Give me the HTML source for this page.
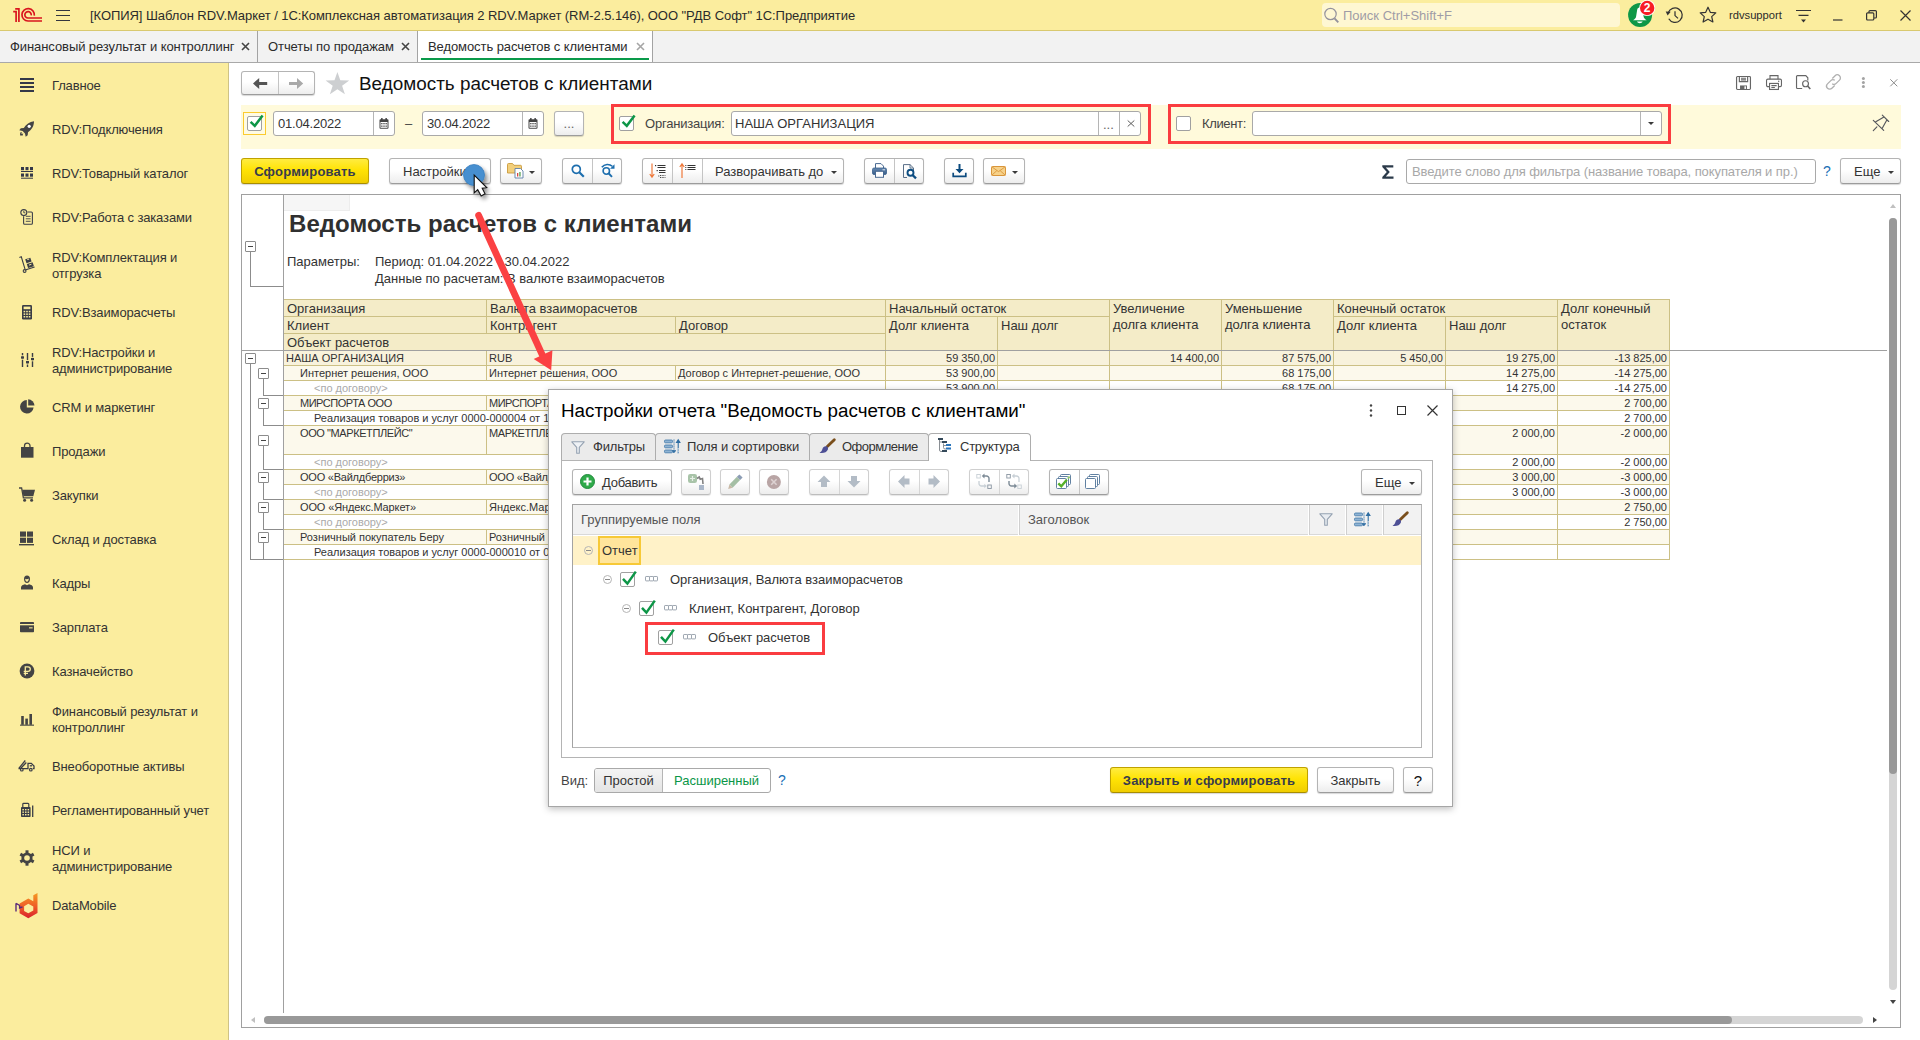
<!DOCTYPE html>
<html lang="ru">
<head>
<meta charset="utf-8">
<title>1C</title>
<style>
*{box-sizing:border-box;margin:0;padding:0}
html,body{width:1920px;height:1040px;overflow:hidden;background:#fff}
body{font-family:"Liberation Sans",sans-serif;font-size:13px;color:#333;position:relative}
.abs{position:absolute}
svg{display:block;position:absolute;overflow:visible}
/* title bar */
#titlebar{position:absolute;left:0;top:0;width:1920px;height:31px;background:#fbed9e;border-bottom:1px solid #d9c96f}
#titlebar .ttl{position:absolute;left:90px;top:1px;height:30px;line-height:30px;font-size:13px;color:#2b2b2b;white-space:nowrap;letter-spacing:-0.06px}
#search{position:absolute;left:1322px;top:3px;width:298px;height:24px;background:#fef7d3;border-radius:4px}
#search span{position:absolute;left:21px;top:0;line-height:25px;font-size:13px;color:#9f9ca6;white-space:nowrap}
/* tab bar */
#tabbar{position:absolute;left:0;top:31px;width:1920px;height:32px;background:#f2f2f2;border-bottom:1px solid #a9a9a9}
.tab{position:absolute;top:0;height:31px;line-height:32px;letter-spacing:-0.080px;font-size:13px;color:#2b2b2b;white-space:nowrap;border-right:1px solid #a3a3a3;padding-left:8px}
.tab .x{position:absolute;top:11px;width:9px;height:9px}
/* sidebar */
#sidebar{position:absolute;left:0;top:63px;width:229px;height:977px;background:#fbed9e;border-right:1px solid #cfc385}
.si{position:absolute;left:52px;margin-top:1px;letter-spacing:-0.140px;font-size:13px;line-height:16px;color:#333;white-space:nowrap}
.ic{position:absolute;left:17px;width:20px;height:20px}

/* main */
.btn{position:absolute;height:26px;border:1px solid #b4b4b4;border-bottom-color:#9c9c9c;border-radius:3px;background:linear-gradient(#ffffff,#ffffff 45%,#ededed);box-shadow:0 1px 1px rgba(0,0,0,.16);font-size:13px;line-height:26px;color:#333;white-space:nowrap;text-align:center}
.btn .dv{position:absolute;top:0;width:1px;height:24px;background:#c4c4c4}
.btn.y{border-color:#bfa100;border-bottom-color:#a88d00;background:linear-gradient(#ffec40,#ffe305 45%,#f0cd00);font-weight:bold;color:#383c4c;letter-spacing:.220px}
.inp{position:absolute;height:25px;border:1px solid #a9a9a9;border-radius:3px;background:#fff;font-size:13px;line-height:23px;color:#333;white-space:nowrap}
.inp .dv{position:absolute;top:0;width:1px;height:23px;background:#b5b5b5}
.cb{position:absolute;width:15px;height:15px;border:1px solid #a0a0a0;border-radius:2px;background:#fff}
.cb svg{left:0px;top:-3px}
.lbl{position:absolute;margin-top:1px;font-size:13px;line-height:16px;color:#444;white-space:nowrap}
.redbox{position:absolute;border:3px solid #fa3c40}
.arr{position:absolute;width:0;height:0;border-left:3px solid transparent;border-right:3px solid transparent;border-top:3px solid #3a3a3a}

/* report */
#rep{position:absolute;left:241px;top:194px;width:1660px;height:834px;border:1px solid #a0a0a0;background:#fff;overflow:hidden}
#rep .c{position:absolute;box-sizing:border-box;border-right:1px solid #ccc085;border-bottom:1px solid #ccc085;font-size:11px;line-height:14px;color:#333;white-space:nowrap;overflow:hidden;padding-left:3px}
#rep .h{background:#f4ecc8;font-size:13px;line-height:16px;padding-left:3px;padding-top:1px;color:#333}
#rep .n{text-align:right;padding-right:2px;padding-left:0}
#rep .g{color:#aaa}
.tg{position:absolute;width:11px;height:11px;border:1px solid #8c8c8c;border-radius:1px;background:#fff}
.tg:after{content:"";position:absolute;left:2px;top:4px;width:5px;height:1px;background:#444}
.ln{position:absolute;background:#8c8c8c}

/* dialog */
#dlg{position:absolute;left:548px;top:389px;width:905px;height:418px;background:#fff;border:1px solid #a6a6a6;box-shadow:0 2px 7px rgba(0,0,0,.26)}
#dlg .dt{position:absolute;top:43px;height:27px;border:1px solid #adadad;border-bottom:none;border-radius:4px 4px 0 0;background:#ebebeb;font-size:13px;line-height:25px;color:#333;white-space:nowrap}
#dlg .dt span{position:absolute;top:0}
.btn.dis{border-color:#cfcfcf;border-bottom-color:#bdbdbd;box-shadow:0 1px 1px rgba(0,0,0,.1)}
.btn.dis .dv{background:#d6d6d6}
.tcb{position:absolute;width:15px;height:15px;border:1px solid #a0a0a0;border-radius:2px;background:#fff}
.tcb svg{left:0px;top:-2px}
.col{position:absolute;width:9px;height:9px;border:1px solid #b5b5b5;border-radius:50%}
.col:after{content:"";position:absolute;left:1px;top:3px;width:5px;height:1px;background:#8a8a8a}
.trow{position:absolute;font-size:13px;line-height:16px;color:#333;white-space:nowrap}
</style>
</head>
<body>
<!-- ===== TITLE BAR ===== -->
<div id="titlebar">
  <svg style="left:0;top:0" width="50" height="30" viewBox="0 0 50 30"><g fill="none" stroke="#d9161f" stroke-width="1.700"><path d="M13.200 11.700H16.100V22"/><path d="M15.200 8.800H18.900V22"/><path d="M34.300 15.600A6.200 6.200 0 1 0 28 21H42"/><path d="M31.200 15.400A3.200 3.200 0 1 0 28 18H42"/></g></svg>
  <svg style="left:56px;top:10px" width="14" height="11" viewBox="0 0 14 11" shape-rendering="crispEdges"><path d="M0 0h14v1H0zM0 5h14v1H0zM0 10h14v1H0z" fill="#33363f"/></svg>
  <div class="ttl">[КОПИЯ] Шаблон RDV.Маркет / 1С:Комплексная автоматизация 2 RDV.Маркет (RM-2.5.146), ООО "РДВ Софт" 1С:Предприятие</div>
  <div id="search"><svg style="left:2px;top:4px" width="16" height="17" viewBox="0 0 16 17"><circle cx="6.5" cy="7" r="5.7" fill="none" stroke="#94929c" stroke-width="1.2"/><path d="M10.5 11.3 L14.3 15.3" stroke="#94929c" stroke-width="1.9"/></svg><span>Поиск Ctrl+Shift+F</span></div>
  <!-- bell -->
  <svg style="left:1627px;top:0" width="32" height="30" viewBox="0 0 32 30"><circle cx="13.1" cy="14.9" r="12" fill="#0e9747"/><path d="M12.6 7.6c-1.500 0-2.300 1.200-2.500 2.600l-1 6.300c-.3 1.600-1.300 2.800-3.100 3.800h13.700c-1.800-1-2.800-2.200-3.100-3.800l-1-6.300c-.2-1.400-1-2.600-2.500-2.600z" fill="#fff"/><path d="M10 21.600h5.600c-.5 1.200-1.500 1.700-2.800 1.700s-2.300-.5-2.800-1.700z" fill="#fff"/><circle cx="20.200" cy="8" r="8" fill="#fff"/><circle cx="20.200" cy="8" r="7.200" fill="#f81c24"/><text x="20.200" y="12.300" font-family="Liberation Sans" font-size="12" font-weight="bold" fill="#fff" text-anchor="middle">2</text></svg>
  <!-- history -->
  <svg style="left:1662px;top:4px" width="24" height="22" viewBox="1662 4 24 22"><g fill="none" stroke="#333" stroke-width="1.25"><path d="M1668.15 12.97A7.2 7.2 0 1 1 1668.76 18.8"/><path d="M1675 11.300V15.600L1678 18.400"/></g><path d="M1665.700 11.500L1670.700 11.800L1667.600 15.400Z" fill="#333"/></svg>
  <!-- star -->
  <svg style="left:1699px;top:6px" width="18" height="17" viewBox="0 0 18 17"><path d="M9 1.200 L11.300 6.300 L16.800 6.900 L12.700 10.600 L13.900 16 L9 13.200 L4.100 16 L5.300 10.600 L1.200 6.900 L6.700 6.300 Z" fill="none" stroke="#333" stroke-width="1.200" stroke-linejoin="round"/></svg>
  <div class="abs" style="left:1729px;top:0;line-height:30px;font-size:11.2px;color:#2b2b2b">rdvsupport</div>
  <svg style="left:1796px;top:9px" width="15" height="14" viewBox="0 0 15 14"><path d="M0 1.500h15M2.500 6.300h10" stroke="#333" stroke-width="1.200"/><path d="M5 10.500h5l-2.500 3z" fill="#333"/></svg>
  <svg style="left:1833px;top:19px" width="10" height="2" viewBox="0 0 10 2"><path d="M0 1h9.500" stroke="#333" stroke-width="1.200"/></svg>
  <svg style="left:1866px;top:10px" width="11" height="11" viewBox="0 0 11 11"><rect x=".6" y="2.800" width="7.200" height="7.200" rx="1" fill="none" stroke="#333" stroke-width="1.200"/><path d="M3 2.800V1.600a1 1 0 0 1 1-1h5.400a1 1 0 0 1 1 1v5.400a1 1 0 0 1-1 1H8" fill="none" stroke="#333" stroke-width="1.200"/></svg>
  <svg style="left:1900px;top:10px" width="11" height="11" viewBox="0 0 11 11"><path d="M.5.500l10 10M10.500.5l-10 10" stroke="#333" stroke-width="1.200"/></svg>
</div>
<!-- ===== TAB BAR ===== -->
<div id="tabbar">
  <div class="tab" style="left:0;width:258px;padding-left:10px">Финансовый результат и контроллинг<svg class="x" style="left:241px" viewBox="0 0 9 9"><path d="M1 1l7 7M8 1l-7 7" stroke="#444" stroke-width="1.600"/></svg></div>
  <div class="tab" style="left:258px;width:160px;padding-left:10px">Отчеты по продажам<svg class="x" style="left:143px" viewBox="0 0 9 9"><path d="M1 1l7 7M8 1l-7 7" stroke="#444" stroke-width="1.600"/></svg></div>
  <div class="tab" style="left:418px;width:235px;padding-left:10px;background:#fff;height:31px">Ведомость расчетов с клиентами<svg class="x" style="left:218px" viewBox="0 0 9 9"><path d="M1 1l7 7M8 1l-7 7" stroke="#a6a6a6" stroke-width="1.600"/></svg><div class="abs" style="left:3px;top:27px;width:228px;height:2px;background:#0a9a4a"></div></div>
</div>
<!-- ===== SIDEBAR ===== -->
<div id="sidebar">
  <svg style="left:20px;top:15px" width="14" height="14" viewBox="0 0 14 14"><path d="M0 1h14M0 5h14M0 9h14M0 13h14" stroke="#343848" stroke-width="2"/></svg>
  <div class="si" style="top:14px">Главное</div>
  <svg style="left:19px;top:58px" width="16" height="16" viewBox="0 0 16 16"><path d="M15 0.300 C10.500 1 7 3.500 4.800 7 L1.800 7.300 L0.300 9.300 L3.600 10 L6 12.400 L6.700 15.700 L8.700 14.200 L9 11.200 C12.500 9 15 5.500 15 0.300Z" fill="#444"/><circle cx="10.200" cy="5.300" r="1.600" fill="#fff"/><path d="M1.200 11.600 L3 11.200 L2.300 12.900 L4.300 12.500 L3.200 15 L1.800 14 L1 15.200 Z" fill="#444"/></svg>
  <div class="si" style="top:58px">RDV:Подключения</div>
  <svg style="left:21px;top:104px" width="12" height="12" viewBox="0 0 12 12"><g fill="#343848"><rect x="0" y="0" width="3" height="3.200"/><rect x="4.500" y="0" width="3" height="3.200"/><rect x="9" y="0" width="3" height="3.200"/><rect x="0" y="4" width="12" height="1"/><rect x="0" y="6.500" width="3" height="3.200"/><rect x="4.500" y="6.500" width="3" height="3.200"/><rect x="9" y="6.500" width="3" height="3.200"/><rect x="0" y="10.700" width="12" height="1"/></g></svg>
  <div class="si" style="top:102px">RDV:Товарный каталог</div>
  <svg style="left:20px;top:146px" width="14" height="16" viewBox="0 0 14 16"><g fill="none" stroke="#3c3f4a" stroke-width="1.100"><path d="M3.600 7.200 V14.200 a1 1 0 0 0 1 1 H11.400 a1 1 0 0 0 1 -1 V4 a1 1 0 0 0 -1 -1 H7.500"/><circle cx="3.800" cy="3.600" r="3"/><path d="M3.800 1.800 V3.800 H5.300" stroke-width=".9"/><path d="M5.800 7.300h4.800M5.800 9.800h4.800M5.800 12.300h4.800" stroke-width=".9"/></g></svg>
  <div class="si" style="top:146px">RDV:Работа с заказами</div>
  <svg style="left:19px;top:193px" width="16" height="17" viewBox="0 0 16 17"><g stroke="#3a3d46" fill="none" stroke-width="1.100"><path d="M0.400 1.600 L2.300 0.800 L6 13.200"/><path d="M6.200 14 L15.600 11"/><circle cx="5.600" cy="15" r="1.400"/></g><g fill="#3a3d46"><path d="M6.200 3.300 L11.300 1.700 L12.600 5.600 L7.500 7.200Z"/><path d="M7.800 8.100 L13.600 6.300 L14.900 10.300 L9.100 12.100Z"/></g><path d="M8.300 3.600 L10.200 3 M10 9.100 L12.400 8.300" stroke="#fbed9e" stroke-width="1"/></svg>
  <div class="si" style="top:186px">RDV:Комплектация и<br>отгрузка</div>
  <svg style="left:22px;top:242px" width="10" height="15" viewBox="0 0 10 15"><rect x="0" y="0" width="10" height="14.500" rx="1.300" fill="#3a3d46"/><rect x="1.600" y="1.600" width="6.800" height="2.600" fill="#fbed9e"/><g fill="#fbed9e"><rect x="1.600" y="5.800" width="1.600" height="1.500"/><rect x="4.200" y="5.800" width="1.600" height="1.500"/><rect x="6.800" y="5.800" width="1.600" height="1.500"/><rect x="1.600" y="8.400" width="1.600" height="1.500"/><rect x="4.200" y="8.400" width="1.600" height="1.500"/><rect x="6.800" y="8.400" width="1.600" height="1.500"/><rect x="1.600" y="11" width="1.600" height="1.500"/><rect x="4.200" y="11" width="1.600" height="1.500"/><rect x="6.800" y="11" width="1.600" height="1.500"/></g></svg>
  <div class="si" style="top:241px">RDV:Взаиморасчеты</div>
  <svg style="left:21px;top:290px" width="13" height="14" viewBox="0 0 13 14"><g stroke="#3a3d46" stroke-width="1.400"><path d="M1.500 0V14M6.500 0V14M11.500 0V14"/></g><g fill="#3a3d46"><rect x="0" y="3.200" width="3" height="2.600"/><rect x="5" y="8" width="3" height="2.600"/><rect x="10" y="4.800" width="3" height="2.600"/></g><g fill="#fbed9e"><rect x="0" y="2.300" width="3" height=".9"/><rect x="0" y="5.800" width="3" height=".9"/><rect x="5" y="7.100" width="3" height=".9"/><rect x="5" y="10.600" width="3" height=".9"/><rect x="10" y="3.900" width="3" height=".9"/><rect x="10" y="7.400" width="3" height=".9"/></g></svg>
  <div class="si" style="top:281px">RDV:Настройки и<br>администрирование</div>
  <svg style="left:20px;top:336px" width="15" height="15" viewBox="0 0 15 15"><path d="M6.800 1 A6.800 6.800 0 1 0 13.600 8.500 L6.800 8.500 Z" fill="#444"/><path d="M8.200 0.300 A6.600 6.600 0 0 1 14.500 6.600 L8.200 6.600 Z" fill="#444"/></svg>
  <div class="si" style="top:336px">CRM и маркетинг</div>
  <svg style="left:21px;top:379px" width="13" height="16" viewBox="0 0 13 16"><path d="M0 5H12.500V15.700H0Z" fill="#444"/><path d="M3.500 7 V3.800 a2.750 2.750 0 0 1 5.500 0 V7" fill="none" stroke="#444" stroke-width="1.300"/><path d="M3.500 5 V7 M9 5 V7" stroke="#fbed9e" stroke-width="1.300" opacity="0"/></svg>
  <div class="si" style="top:380px">Продажи</div>
  <svg style="left:19px;top:424px" width="16" height="15" viewBox="0 0 16 15"><path d="M0 1 H2.600 L4.400 10.800 H14" fill="none" stroke="#444" stroke-width="1.300"/><path d="M3.200 2.800 H16 L14.300 9.300 H4.400Z" fill="#444"/><circle cx="5.600" cy="13.200" r="1.500" fill="#444"/><circle cx="12.600" cy="13.200" r="1.500" fill="#444"/></svg>
  <div class="si" style="top:424px">Закупки</div>
  <svg style="left:19px;top:468px" width="15" height="15" viewBox="0 0 15 15"><g fill="#444"><rect x="1" y="0.500" width="6" height="5.200"/><rect x="8" y="0.500" width="6" height="5.200"/><rect x="1" y="6.700" width="6" height="5.200"/><rect x="8" y="6.700" width="6" height="5.200"/><rect x="0" y="13" width="15" height="1.400"/></g></svg>
  <div class="si" style="top:468px">Склад и доставка</div>
  <svg style="left:21px;top:512px" width="12" height="15" viewBox="0 0 12 15"><path d="M6 0.500 C8 0.500 9 2 9 4 C9 6.500 7.700 8 6 8 C4.300 8 3 6.500 3 4 C3 2 4 0.500 6 0.500Z" fill="#444"/><path d="M0 14.500 V12.500 C0 10.500 2 9.800 4 9.300 L6 10.300 L8 9.300 C10 9.800 12 10.500 12 12.500 V14.500Z" fill="#444"/><path d="M4.200 3.800 C5 4.300 7 4.300 7.800 3.600 C7.800 5.500 7 6.800 6 6.800 C5 6.800 4.200 5.500 4.200 3.800Z" fill="#fbed9e"/></svg>
  <div class="si" style="top:512px">Кадры</div>
  <svg style="left:20px;top:559px" width="14" height="11" viewBox="0 0 14 11"><rect x="0" y="0" width="14" height="10.300" rx=".8" fill="#444"/><rect x="0" y="2" width="14" height="1.300" fill="#fbed9e"/><rect x="9" y="5.300" width="3.600" height="1.100" fill="#fbed9e"/></svg>
  <div class="si" style="top:556px">Зарплата</div>
  <svg style="left:19px;top:600px" width="16" height="16" viewBox="0 0 16 16"><circle cx="8" cy="8" r="7.400" fill="#444"/><path d="M6.300 12.500 V3.800 H9 a2.300 2.300 0 0 1 0 4.600 H4.700 M4.700 10.400 H9" fill="none" stroke="#fbed9e" stroke-width="1.300"/></svg>
  <div class="si" style="top:600px">Казначейство</div>
  <svg style="left:20px;top:651px" width="14" height="12" viewBox="0 0 14 12"><g fill="#444"><rect x="1.200" y="2" width="2.600" height="8.800"/><rect x="5.300" y="4.600" width="2.600" height="6.200"/><rect x="9.400" y="0" width="2.600" height="10.800"/><rect x="0" y="10.600" width="14" height="1.100"/></g></svg>
  <div class="si" style="top:640px">Финансовый результат и<br>контроллинг</div>
  <svg style="left:18px;top:696px" width="17" height="13" viewBox="0 0 17 13"><g fill="none" stroke="#3a3d46" stroke-width="1.300"><path d="M0.800 9.300 L7.300 1.500 M2.800 9.300 L8.300 3.500 M0.500 9.600 H10 V4.300 H13.300 L16 7 V9.600 H14.800"/><path d="M11.800 6.800 H14"/></g><circle cx="3.800" cy="10.700" r="1.900" fill="#3a3d46"/><circle cx="12.800" cy="10.700" r="1.900" fill="#3a3d46"/><circle cx="3.800" cy="10.700" r=".7" fill="#fbed9e"/><circle cx="12.800" cy="10.700" r=".7" fill="#fbed9e"/></svg>
  <div class="si" style="top:695px">Внеоборотные активы</div>
  <svg style="left:21px;top:740px" width="13" height="14" viewBox="0 0 13 14"><path d="M1.800 4 V1.200 a.8 .8 0 0 1 .8 -.8 H7 a.8 .8 0 0 1 .8 .8 V4" fill="none" stroke="#3a3d46" stroke-width="1.200"/><rect x="0" y="4" width="9.600" height="10" rx=".8" fill="#3a3d46"/><g fill="#fbed9e"><rect x="1.400" y="6" width="1.500" height="1.400"/><rect x="4" y="6" width="1.500" height="1.400"/><rect x="6.600" y="6" width="1.500" height="1.400"/><rect x="1.400" y="8.500" width="1.500" height="1.400"/><rect x="4" y="8.500" width="1.500" height="1.400"/><rect x="6.600" y="8.500" width="1.500" height="1.400"/><rect x="1.400" y="11" width="1.500" height="1.400"/><rect x="4" y="11" width="1.500" height="1.400"/><rect x="6.600" y="11" width="1.500" height="1.400"/></g><path d="M11.700 2.500 V14" stroke="#3a3d46" stroke-width="1.300"/></svg>
  <div class="si" style="top:739px">Регламентированный учет</div>
  <svg style="left:19px;top:787px" width="16" height="16" viewBox="0 0 16 16"><g fill="#444"><circle cx="8" cy="8" r="5.600"/><g id="t"><rect x="6.500" y="0.300" width="3" height="3.200"/><rect x="6.500" y="12.500" width="3" height="3.200"/></g><use href="#t" transform="rotate(60 8 8)"/><use href="#t" transform="rotate(120 8 8)"/></g><circle cx="8" cy="8" r="2.800" fill="#fbed9e"/></svg>
  <div class="si" style="top:779px">НСИ и<br>администрирование</div>
  <svg style="left:15px;top:829px" width="24" height="27" viewBox="0 0 24 27"><defs><linearGradient id="dm" x1="0" y1="0" x2="0" y2="1"><stop offset="0" stop-color="#f59a23"/><stop offset=".55" stop-color="#ee5a28"/><stop offset="1" stop-color="#d8202c"/></linearGradient></defs><path d="M22.500 1 L18.300 3.300 V9.300 L13.300 6.500 L4.600 11.500 V21.300 L13.300 26.300 L22.500 21 Z M13.300 11.800 L18.300 14.600 V18.500 L13.300 21.300 L9.100 18.900 V14.200 Z" fill="url(#dm)" fill-rule="evenodd"/><path d="M1 11.300 V19.600 M1 11.300 L4.800 13.500 M4.600 13.500 V16 L7.500 14.800" fill="none" stroke="#5a2a7a" stroke-width="1.400"/></svg>
  <div class="si" style="top:834px">DataMobile</div>
</div>

<!-- ===== MAIN ===== -->
<div id="main">
  <!-- nav buttons -->
  <div class="btn" style="left:241px;top:71px;width:74px;height:24px"><div class="dv" style="left:36px;height:22px"></div>
    <svg style="left:0;top:0" width="72" height="22" viewBox="242 72 72 22"><path d="M253 83.500L259.200 78V82H267.200V85H259.200V89Z" fill="#555"/><path d="M303.200 83.500L297 78V82H289V85H297V89Z" fill="#a9a9a9"/></svg>
  </div>
  <svg style="left:0;top:0" width="400" height="100" viewBox="0 0 400 100"><path d="M337.400 72L340.300 80.300 349.200 80.500 342.100 85.800 344.900 94.200 337.400 89.200 329.900 94.200 332.700 85.800 325.600 80.500 334.500 80.300Z" fill="#cdcfd1"/></svg>
  <div class="abs" style="left:359px;top:71px;font-size:18.900px;line-height:26px;color:#111;white-space:nowrap">Ведомость расчетов с клиентами</div>
  <!-- header right icons -->
  <svg style="left:1736px;top:76px" width="15" height="14" viewBox="0 0 16 16" preserveAspectRatio="none"><g fill="none" stroke="#666" stroke-width="1.250"><path d="M1.600.6h12.800a1 1 0 0 1 1 1v12.800a1 1 0 0 1-1 1H1.600a1 1 0 0 1-1-1V1.600a1 1 0 0 1 1-1z"/><path d="M3.600.6v5.800h8.800V.6M5.300 2.600h5.400M5.300 4.400h5.400"/></g><path d="M4.300 15.200v-4.400h7.400v4.400z" fill="#666"/><rect x="9" y="11.800" width="1.600" height="3" fill="#fff"/></svg>
  <svg style="left:1766px;top:75px" width="16" height="15" viewBox="0 0 18 16" preserveAspectRatio="none"><g fill="none" stroke="#666" stroke-width="1.250"><path d="M4.500 4.400V.6h9v3.800"/><rect x=".6" y="4.400" width="16.800" height="8" rx="1.500"/><rect x="4" y="9" width="10" height="6.400" fill="#fff"/><path d="M6 11.300h6M6 13.300h4"/></g><circle cx="14.300" cy="6.600" r=".8" fill="#666"/></svg>
  <svg style="left:1796px;top:75px" width="15" height="15.500" viewBox="0 0 17 17" preserveAspectRatio="none"><g fill="none" stroke="#666" stroke-width="1.300"><path d="M7 14.800H1.600a1 1 0 0 1-1-1V1.600a1 1 0 0 1 1-1h9.500L13.400 3v3"/><circle cx="10.800" cy="9.600" r="3.300"/><path d="M13.200 12l3 3.400" stroke-width="1.800"/></g></svg>
  <svg style="left:1825px;top:74px" width="17" height="16" viewBox="0 0 17 16"><g fill="none" stroke="#b0b0b0" stroke-width="1.300"><path d="M7.300 4.500l2.800-2.800a3.100 3.100 0 0 1 4.400 4.400l-3.300 3.300a3.100 3.100 0 0 1-4 .3"/><path d="M9.700 11.500l-2.800 2.800a3.100 3.100 0 0 1-4.400-4.400l3.300-3.300a3.100 3.100 0 0 1 4-.3"/></g></svg>
  <svg style="left:1861px;top:76px" width="5" height="13" viewBox="0 0 5 13"><g fill="#a3a3a3"><circle cx="2.400" cy="2.500" r="1.500"/><circle cx="2.400" cy="6.500" r="1.500"/><circle cx="2.400" cy="10.500" r="1.500"/></g></svg>
  <svg style="left:1890px;top:79px" width="8" height="8" viewBox="0 0 8 8"><path d="M.3.300l7 7M7.300.3l-7 7" stroke="#8c8c8c" stroke-width="1"/></svg>
  <!-- filter band -->
  <div class="abs" style="left:241px;top:105px;width:1660px;height:44px;background:#fffadb"></div>
  <div class="abs" style="left:243px;top:112px;width:23px;height:23px;border:1px solid #fbcb2e;background:#fffbe3"></div>
  <div class="cb" style="left:247px;top:116px"><svg width="17" height="16" viewBox="0 0 17 16"><path d="M2.600 7.800 L6.800 11.800 L14.600 1.600" fill="none" stroke="#0d9647" stroke-width="2.500"/></svg></div>
  <div class="inp" style="left:273px;top:111px;width:122px"><span style="position:absolute;left:4px;letter-spacing:-0.200px">01.04.2022</span><div class="dv" style="left:99px"></div>
    <svg style="left:105px;top:6px" width="10" height="11" viewBox="0 0 10 11"><path d="M.5 2.200a1 1 0 0 1 1-1h7a1 1 0 0 1 1 1v7.600a1 1 0 0 1-1 1h-7a1 1 0 0 1-1-1z" fill="#444"/><rect x="2" y="0" width="1.600" height="2.400" rx=".5" fill="#444"/><rect x="6.400" y="0" width="1.600" height="2.400" rx=".5" fill="#444"/><rect x="1.500" y="4" width="7" height="5.800" fill="#fff"/><g fill="#444"><rect x="2.200" y="5" width="1.300" height="1.300"/><rect x="4.350" y="5" width="1.300" height="1.300"/><rect x="6.500" y="5" width="1.300" height="1.300"/><rect x="2.200" y="7.500" width="1.300" height="1.300"/><rect x="4.350" y="7.500" width="1.300" height="1.300"/><rect x="6.500" y="7.500" width="1.300" height="1.300"/></g></svg></div>
  <div class="lbl" style="left:405px;top:115px">–</div>
  <div class="inp" style="left:422px;top:111px;width:122px"><span style="position:absolute;left:4px;letter-spacing:-0.200px">30.04.2022</span><div class="dv" style="left:99px"></div>
    <svg style="left:105px;top:6px" width="10" height="11" viewBox="0 0 10 11"><path d="M.5 2.200a1 1 0 0 1 1-1h7a1 1 0 0 1 1 1v7.600a1 1 0 0 1-1 1h-7a1 1 0 0 1-1-1z" fill="#444"/><rect x="2" y="0" width="1.600" height="2.400" rx=".5" fill="#444"/><rect x="6.400" y="0" width="1.600" height="2.400" rx=".5" fill="#444"/><rect x="1.500" y="4" width="7" height="5.800" fill="#fff"/><g fill="#444"><rect x="2.200" y="5" width="1.300" height="1.300"/><rect x="4.350" y="5" width="1.300" height="1.300"/><rect x="6.500" y="5" width="1.300" height="1.300"/><rect x="2.200" y="7.500" width="1.300" height="1.300"/><rect x="4.350" y="7.500" width="1.300" height="1.300"/><rect x="6.500" y="7.500" width="1.300" height="1.300"/></g></svg></div>
  <div class="btn" style="left:554px;top:111px;width:30px;height:25px;color:#666;line-height:24px">...</div>
  <div class="redbox" style="left:611px;top:104px;width:540px;height:40px"></div>
  <div class="cb" style="left:619px;top:116px"><svg width="17" height="16" viewBox="0 0 17 16"><path d="M2.600 7.800 L6.800 11.800 L14.600 1.600" fill="none" stroke="#0d9647" stroke-width="2.500"/></svg></div>
  <div class="lbl" style="left:645px;top:115px;letter-spacing:-.200px">Организация:</div>
  <div class="inp" style="left:731px;top:111px;width:410px"><span style="position:absolute;left:3px">НАША ОРГАНИЗАЦИЯ</span><div class="dv" style="left:366px"></div><div class="dv" style="left:387px"></div><span style="position:absolute;left:371px;color:#666;top:1px">...</span><svg style="left:395px;top:8px" width="8" height="7" viewBox="0 0 8 7"><path d="M.7.5l6.600 6M7.300.5l-6.600 6" stroke="#555" stroke-width=".95"/></svg></div>
  <div class="redbox" style="left:1168px;top:104px;width:503px;height:40px"></div>
  <div class="cb" style="left:1176px;top:116px"></div>
  <div class="lbl" style="left:1202px;top:115px;letter-spacing:-.350px">Клиент:</div>
  <div class="inp" style="left:1252px;top:111px;width:410px"><div class="dv" style="left:387px"></div><div class="arr" style="left:395px;top:10px"></div></div>
  <svg style="left:1870px;top:112px" width="22" height="22" viewBox="1870 112 22 22"><g fill="none" stroke="#55575c" stroke-width="1.15" stroke-linecap="round"><path d="M1882.3 115.2L1888.7 121.5M1873.3 120.4L1883.7 130.4M1875.4 122.1L1883.5 117.3M1882.1 128.5L1886.7 120.2M1876.9 126.9L1873.3 130.6"/></g></svg>
  <!-- toolbar -->
  <div class="btn y" style="left:241px;top:158px;width:128px">Сформировать</div>
  <div class="btn" style="left:389px;top:158px;width:102px;text-align:left;padding-left:13px">Настройки...</div>
  <div class="btn" style="left:500px;top:158px;width:42px"><!--folder-->
    <svg style="left:6px;top:3px" width="18" height="17" viewBox="0 0 18 17"><path d="M.5 2.500a1 1 0 0 1 1-1h4l1.500 1.800h6.500a1 1 0 0 1 1 1V11H.5z" fill="#f2cf7b" stroke="#c99a3c" stroke-width=".9"/><path d="M8 6.500h5.500l2.500 2.500v7H8z" fill="#fff" stroke="#5f7fa8" stroke-width=".9"/><rect x="10" y="11" width="1.300" height="3.500" fill="#d9473f"/><rect x="12.300" y="10" width="1.300" height="4.500" fill="#4f9d4f"/></svg>
    <div class="arr" style="left:28px;top:12px"></div></div>
  <div class="btn" style="left:562px;top:158px;width:60px"><div class="dv" style="left:29px"></div>
    <svg style="left:8px;top:5px" width="14" height="14" viewBox="0 0 14 14"><circle cx="5.300" cy="5.300" r="4" fill="none" stroke="#1d6eae" stroke-width="1.700"/><path d="M8.300 8.300l4.500 4.500" stroke="#1d6eae" stroke-width="2.200"/></svg>
    <svg style="left:37px;top:4px" width="16" height="15" viewBox="0 0 16 15"><circle cx="6.300" cy="8" r="3.200" fill="none" stroke="#1d6eae" stroke-width="1.600"/><path d="M8.800 10.500l3.200 3.300" stroke="#1d6eae" stroke-width="1.900"/><path d="M1.800 4.300C4.500.6 9.500.6 12.300 3.300" fill="none" stroke="#1d6eae" stroke-width="1.500"/><path d="M14.500 1.300v4.500H10z" fill="#1d6eae"/></svg></div>
  <div class="btn" style="left:642px;top:158px;width:202px"><div class="dv" style="left:29px"></div><div class="dv" style="left:59px"></div>
    <svg style="left:6px;top:4px" width="18" height="16" viewBox="0 0 18 16"><path d="M3 .5V13.500M.8 11l2.200 3.200L5.200 11" fill="none" stroke="#ee7a3d" stroke-width="1.200"/><g stroke="#333"><path d="M8.500 2.500h8M8.500 4.500h8" stroke-width="1"/><path d="M10 7.500h6.500M10 9.500h6.500" stroke-width="1"/><path d="M11 12.500h5.500M11 14.500h5.500" stroke-width=".9" stroke-dasharray="1 .7"/></g><g fill="#333"><rect x="6" y="2" width="1.200" height="1.200"/><rect x="7.600" y="7" width="1.200" height="1.200"/><rect x="9.300" y="12.500" width="1" height="1"/></g></svg>
    <svg style="left:36px;top:4px" width="18" height="16" viewBox="0 0 18 16"><path d="M3 15V1.500M.8 4L3 .8 5.200 4" fill="none" stroke="#ee7a3d" stroke-width="1.200"/><g stroke="#333" stroke-width="1"><path d="M8.500 2.500h8M8.500 4.500h8M8.500 6.500h8"/></g><g fill="#333"><rect x="6.300" y="2" width="1" height="1"/><rect x="6.300" y="4" width="1" height="1"/><rect x="6.300" y="6" width="1" height="1"/></g></svg>
    <span style="position:absolute;left:72px">Разворачивать до</span><div class="arr" style="left:188px;top:12px"></div></div>
  <div class="btn" style="left:864px;top:158px;width:60px"><div class="dv" style="left:29px"></div>
    <svg style="left:7px;top:4px" width="15" height="15" viewBox="0 0 15 15"><defs><linearGradient id="pg" x1="0" y1="0" x2="0" y2="1"><stop offset="0" stop-color="#6689b0"/><stop offset="1" stop-color="#3a5f8b"/></linearGradient></defs><path d="M3.500 5V.6h5.500l2.500 2.500V5" fill="#fff" stroke="#4a6a92" stroke-width="1"/><rect x=".5" y="5" width="14" height="6.500" rx="1.500" fill="url(#pg)" stroke="#3a5f8b" stroke-width=".8"/><rect x="3.500" y="8.300" width="8" height="6" fill="#fff" stroke="#4a6a92" stroke-width="1"/><rect x="10.500" y="6.300" width="2.500" height="1" fill="#dfe8f2"/></svg>
    <svg style="left:37px;top:5px" width="15" height="16" viewBox="0 0 15 16"><path d="M1.500.6h6.500L11.500 4v3M5 13.500H1.500V.6" fill="none" stroke="#5a6f88" stroke-width="1"/><path d="M8 .6V4h3.500" fill="none" stroke="#5a6f88" stroke-width=".9"/><circle cx="8.500" cy="8.800" r="3" fill="#fff" stroke="#0e4e82" stroke-width="1.900"/><path d="M10.800 11.200l3.200 3.200" stroke="#0e4e82" stroke-width="2.300"/></svg></div>
  <div class="btn" style="left:944px;top:158px;width:30px"><svg style="left:7px;top:5px" width="15" height="14" viewBox="0 0 15 14"><path d="M6.500 0h2v5h3L7.500 9.200 3.500 5h3z" fill="#0b4a7e"/><path d="M1.200 8.800V12.300H13.800V8.800" fill="none" stroke="#0b4a7e" stroke-width="1.700"/></svg></div>
  <div class="btn" style="left:983px;top:158px;width:42px"><svg style="left:7px;top:7px" width="15" height="10" viewBox="0 0 15 10"><rect x=".5" y=".5" width="14" height="9" rx="1" fill="#f7d28a" stroke="#d9953a" stroke-width="1"/><path d="M.8.800L7.500 5.600 14.200.8M.8 9.200l5-4.500M14.200 9.200l-5-4.500" fill="none" stroke="#d9953a" stroke-width=".9"/></svg><div class="arr" style="left:28px;top:12px"></div></div>
  <svg style="left:1382px;top:165px" width="12" height="14" viewBox="0 0 12 14"><path d="M.3.300H11.300V2.400H3.800L7.800 6.900 3.800 11.500H11.500V13.700H.3V12L4.800 6.900.3 1.900Z" fill="#2b3a4a"/></svg>
  <div class="inp" style="left:1406px;top:159px;width:410px"><span style="position:absolute;left:5px;color:#a8a8a8;letter-spacing:-.090px">Введите слово для фильтра (название товара, покупателя и пр.)</span></div>
  <div class="abs" style="left:1823px;top:163px;font-size:14px;line-height:16px;color:#1a6fb5">?</div>
  <div class="btn" style="left:1840px;top:158px;width:61px;text-align:left;padding-left:13px">Еще<div class="arr" style="left:47px;top:12px"></div></div>
</div>
<!-- ===== REPORT ===== -->
<div id="rep">
<div class="abs" style="left:42px;top:0;width:66px;height:16px;background:#f6f6f6;border-right:1px solid #ededed;border-bottom:1px solid #ededed"></div>
<div class="ln" style="left:41px;top:0;width:1px;height:818px;background:#a0a0a0"></div>
<div class="abs" style="left:47px;top:14px;font-size:24px;line-height:30px;font-weight:bold;color:#303030;white-space:nowrap;letter-spacing:.050px">Ведомость расчетов с клиентами</div>
<div class="abs" style="left:45px;top:58px;font-size:13px;line-height:17px;color:#333;white-space:nowrap">Параметры:</div>
<div class="abs" style="left:133px;top:58px;font-size:13px;line-height:17px;color:#333;white-space:nowrap">Период: 01.04.2022 - 30.04.2022<br>Данные по расчетам: В валюте взаиморасчетов</div>
<div class="abs" style="left:42px;top:104px;width:1386px;height:1px;background:#ccc085"></div>
<div class="c h" style="left:42px;top:105px;width:203px;height:17px;">Организация</div>
<div class="c h" style="left:245px;top:105px;width:399px;height:17px;">Валюта взаиморасчетов</div>
<div class="c h" style="left:644px;top:105px;width:224px;height:17px;">Начальный остаток</div>
<div class="c h" style="left:868px;top:105px;width:112px;height:51px;">Увеличение<br>долга клиента</div>
<div class="c h" style="left:980px;top:105px;width:112px;height:51px;">Уменьшение<br>долга клиента</div>
<div class="c h" style="left:1092px;top:105px;width:224px;height:17px;">Конечный остаток</div>
<div class="c h" style="left:1316px;top:105px;width:112px;height:51px;">Долг конечный<br>остаток</div>
<div class="c h" style="left:42px;top:122px;width:203px;height:17px;">Клиент</div>
<div class="c h" style="left:245px;top:122px;width:189px;height:17px;">Контрагент</div>
<div class="c h" style="left:434px;top:122px;width:210px;height:17px;">Договор</div>
<div class="c h" style="left:644px;top:122px;width:112px;height:34px;">Долг клиента</div>
<div class="c h" style="left:756px;top:122px;width:112px;height:34px;">Наш долг</div>
<div class="c h" style="left:1092px;top:122px;width:112px;height:34px;">Долг клиента</div>
<div class="c h" style="left:1204px;top:122px;width:112px;height:34px;">Наш долг</div>
<div class="c h" style="left:42px;top:139px;width:602px;height:17px;">Объект расчетов</div>
<div class="c " style="left:42px;top:156px;width:203px;height:15px;background:#f8f2dc;padding-left:2px">НАША ОРГАНИЗАЦИЯ</div>
<div class="c " style="left:245px;top:156px;width:399px;height:15px;background:#f8f2dc;padding-left:2px">RUB</div>
<div class="c n" style="left:644px;top:156px;width:112px;height:15px;background:#f8f2dc;">59 350,00</div>
<div class="c n" style="left:756px;top:156px;width:112px;height:15px;background:#f8f2dc;"></div>
<div class="c n" style="left:868px;top:156px;width:112px;height:15px;background:#f8f2dc;">14 400,00</div>
<div class="c n" style="left:980px;top:156px;width:112px;height:15px;background:#f8f2dc;">87 575,00</div>
<div class="c n" style="left:1092px;top:156px;width:112px;height:15px;background:#f8f2dc;">5 450,00</div>
<div class="c n" style="left:1204px;top:156px;width:112px;height:15px;background:#f8f2dc;">19 275,00</div>
<div class="c n" style="left:1316px;top:156px;width:112px;height:15px;background:#f8f2dc;">-13 825,00</div>
<div class="c " style="left:42px;top:171px;width:203px;height:15px;background:#fcf9ec;padding-left:16px">Интернет решения, ООО</div>
<div class="c " style="left:245px;top:171px;width:189px;height:15px;background:#fcf9ec;padding-left:2px">Интернет решения, ООО</div>
<div class="c " style="left:434px;top:171px;width:210px;height:15px;background:#fcf9ec;padding-left:2px">Договор с Интернет-решение, ООО</div>
<div class="c n" style="left:644px;top:171px;width:112px;height:15px;background:#fcf9ec;">53 900,00</div>
<div class="c n" style="left:756px;top:171px;width:112px;height:15px;background:#fcf9ec;"></div>
<div class="c n" style="left:868px;top:171px;width:112px;height:15px;background:#fcf9ec;"></div>
<div class="c n" style="left:980px;top:171px;width:112px;height:15px;background:#fcf9ec;">68 175,00</div>
<div class="c n" style="left:1092px;top:171px;width:112px;height:15px;background:#fcf9ec;"></div>
<div class="c n" style="left:1204px;top:171px;width:112px;height:15px;background:#fcf9ec;">14 275,00</div>
<div class="c n" style="left:1316px;top:171px;width:112px;height:15px;background:#fcf9ec;">-14 275,00</div>
<div class="c g" style="left:42px;top:186px;width:602px;height:15px;background:#fff;padding-left:30px">&lt;по договору&gt;</div>
<div class="c n" style="left:644px;top:186px;width:112px;height:15px;background:#fff;">53 900,00</div>
<div class="c n" style="left:756px;top:186px;width:112px;height:15px;background:#fff;"></div>
<div class="c n" style="left:868px;top:186px;width:112px;height:15px;background:#fff;"></div>
<div class="c n" style="left:980px;top:186px;width:112px;height:15px;background:#fff;">68 175,00</div>
<div class="c n" style="left:1092px;top:186px;width:112px;height:15px;background:#fff;"></div>
<div class="c n" style="left:1204px;top:186px;width:112px;height:15px;background:#fff;">14 275,00</div>
<div class="c n" style="left:1316px;top:186px;width:112px;height:15px;background:#fff;">-14 275,00</div>
<div class="c " style="left:42px;top:201px;width:203px;height:15px;background:#fcf9ec;padding-left:16px"><span style="letter-spacing:-.480px">МИРСПОРТА ООО</span></div>
<div class="c " style="left:245px;top:201px;width:189px;height:15px;background:#fcf9ec;padding-left:2px"><span style="letter-spacing:-.480px">МИРСПОРТА ООО</span></div>
<div class="c " style="left:434px;top:201px;width:210px;height:15px;background:#fcf9ec;padding-left:2px">Основной договор</div>
<div class="c n" style="left:644px;top:201px;width:112px;height:15px;background:#fcf9ec;"></div>
<div class="c n" style="left:756px;top:201px;width:112px;height:15px;background:#fcf9ec;"></div>
<div class="c n" style="left:868px;top:201px;width:112px;height:15px;background:#fcf9ec;">2 700,00</div>
<div class="c n" style="left:980px;top:201px;width:112px;height:15px;background:#fcf9ec;"></div>
<div class="c n" style="left:1092px;top:201px;width:112px;height:15px;background:#fcf9ec;">2 700,00</div>
<div class="c n" style="left:1204px;top:201px;width:112px;height:15px;background:#fcf9ec;"></div>
<div class="c n" style="left:1316px;top:201px;width:112px;height:15px;background:#fcf9ec;">2 700,00</div>
<div class="c " style="left:42px;top:216px;width:602px;height:15px;background:#fff;padding-left:30px">Реализация товаров и услуг 0000-000004 от 11.04.2022 12:00:00</div>
<div class="c n" style="left:644px;top:216px;width:112px;height:15px;background:#fff;"></div>
<div class="c n" style="left:756px;top:216px;width:112px;height:15px;background:#fff;"></div>
<div class="c n" style="left:868px;top:216px;width:112px;height:15px;background:#fff;">2 700,00</div>
<div class="c n" style="left:980px;top:216px;width:112px;height:15px;background:#fff;"></div>
<div class="c n" style="left:1092px;top:216px;width:112px;height:15px;background:#fff;">2 700,00</div>
<div class="c n" style="left:1204px;top:216px;width:112px;height:15px;background:#fff;"></div>
<div class="c n" style="left:1316px;top:216px;width:112px;height:15px;background:#fff;">2 700,00</div>
<div class="c " style="left:42px;top:231px;width:203px;height:29px;background:#fcf9ec;padding-left:16px"><span style="letter-spacing:-.410px">ООО "МАРКЕТПЛЕЙС"</span></div>
<div class="c " style="left:245px;top:231px;width:189px;height:29px;background:#fcf9ec;padding-left:2px"><span style="letter-spacing:-.410px">МАРКЕТПЛЕЙС</span></div>
<div class="c " style="left:434px;top:231px;width:210px;height:29px;background:#fcf9ec;padding-left:2px">Договор с МАРКЕТПЛЕЙС</div>
<div class="c n" style="left:644px;top:231px;width:112px;height:29px;background:#fcf9ec;"></div>
<div class="c n" style="left:756px;top:231px;width:112px;height:29px;background:#fcf9ec;"></div>
<div class="c n" style="left:868px;top:231px;width:112px;height:29px;background:#fcf9ec;"></div>
<div class="c n" style="left:980px;top:231px;width:112px;height:29px;background:#fcf9ec;">2 000,00</div>
<div class="c n" style="left:1092px;top:231px;width:112px;height:29px;background:#fcf9ec;"></div>
<div class="c n" style="left:1204px;top:231px;width:112px;height:29px;background:#fcf9ec;">2 000,00</div>
<div class="c n" style="left:1316px;top:231px;width:112px;height:29px;background:#fcf9ec;">-2 000,00</div>
<div class="c g" style="left:42px;top:260px;width:602px;height:15px;background:#fff;padding-left:30px">&lt;по договору&gt;</div>
<div class="c n" style="left:644px;top:260px;width:112px;height:15px;background:#fff;"></div>
<div class="c n" style="left:756px;top:260px;width:112px;height:15px;background:#fff;"></div>
<div class="c n" style="left:868px;top:260px;width:112px;height:15px;background:#fff;"></div>
<div class="c n" style="left:980px;top:260px;width:112px;height:15px;background:#fff;">2 000,00</div>
<div class="c n" style="left:1092px;top:260px;width:112px;height:15px;background:#fff;"></div>
<div class="c n" style="left:1204px;top:260px;width:112px;height:15px;background:#fff;">2 000,00</div>
<div class="c n" style="left:1316px;top:260px;width:112px;height:15px;background:#fff;">-2 000,00</div>
<div class="c " style="left:42px;top:275px;width:203px;height:15px;background:#fcf9ec;padding-left:16px"><span style="letter-spacing:-.230px">ООО «Вайлдберриз»</span></div>
<div class="c " style="left:245px;top:275px;width:189px;height:15px;background:#fcf9ec;padding-left:2px"><span style="letter-spacing:-.230px">ООО «Вайлдберриз»</span></div>
<div class="c " style="left:434px;top:275px;width:210px;height:15px;background:#fcf9ec;padding-left:2px">Договор с Вайлдберриз</div>
<div class="c n" style="left:644px;top:275px;width:112px;height:15px;background:#fcf9ec;"></div>
<div class="c n" style="left:756px;top:275px;width:112px;height:15px;background:#fcf9ec;"></div>
<div class="c n" style="left:868px;top:275px;width:112px;height:15px;background:#fcf9ec;"></div>
<div class="c n" style="left:980px;top:275px;width:112px;height:15px;background:#fcf9ec;">3 000,00</div>
<div class="c n" style="left:1092px;top:275px;width:112px;height:15px;background:#fcf9ec;"></div>
<div class="c n" style="left:1204px;top:275px;width:112px;height:15px;background:#fcf9ec;">3 000,00</div>
<div class="c n" style="left:1316px;top:275px;width:112px;height:15px;background:#fcf9ec;">-3 000,00</div>
<div class="c g" style="left:42px;top:290px;width:602px;height:15px;background:#fff;padding-left:30px">&lt;по договору&gt;</div>
<div class="c n" style="left:644px;top:290px;width:112px;height:15px;background:#fff;"></div>
<div class="c n" style="left:756px;top:290px;width:112px;height:15px;background:#fff;"></div>
<div class="c n" style="left:868px;top:290px;width:112px;height:15px;background:#fff;"></div>
<div class="c n" style="left:980px;top:290px;width:112px;height:15px;background:#fff;">3 000,00</div>
<div class="c n" style="left:1092px;top:290px;width:112px;height:15px;background:#fff;"></div>
<div class="c n" style="left:1204px;top:290px;width:112px;height:15px;background:#fff;">3 000,00</div>
<div class="c n" style="left:1316px;top:290px;width:112px;height:15px;background:#fff;">-3 000,00</div>
<div class="c " style="left:42px;top:305px;width:203px;height:15px;background:#fcf9ec;padding-left:16px"><span style="letter-spacing:-.120px">ООО «Яндекс.Маркет»</span></div>
<div class="c " style="left:245px;top:305px;width:189px;height:15px;background:#fcf9ec;padding-left:2px">Яндекс.Маркет</div>
<div class="c " style="left:434px;top:305px;width:210px;height:15px;background:#fcf9ec;padding-left:2px">Основной договор</div>
<div class="c n" style="left:644px;top:305px;width:112px;height:15px;background:#fcf9ec;"></div>
<div class="c n" style="left:756px;top:305px;width:112px;height:15px;background:#fcf9ec;"></div>
<div class="c n" style="left:868px;top:305px;width:112px;height:15px;background:#fcf9ec;">2 750,00</div>
<div class="c n" style="left:980px;top:305px;width:112px;height:15px;background:#fcf9ec;"></div>
<div class="c n" style="left:1092px;top:305px;width:112px;height:15px;background:#fcf9ec;">2 750,00</div>
<div class="c n" style="left:1204px;top:305px;width:112px;height:15px;background:#fcf9ec;"></div>
<div class="c n" style="left:1316px;top:305px;width:112px;height:15px;background:#fcf9ec;">2 750,00</div>
<div class="c g" style="left:42px;top:320px;width:602px;height:15px;background:#fff;padding-left:30px">&lt;по договору&gt;</div>
<div class="c n" style="left:644px;top:320px;width:112px;height:15px;background:#fff;"></div>
<div class="c n" style="left:756px;top:320px;width:112px;height:15px;background:#fff;"></div>
<div class="c n" style="left:868px;top:320px;width:112px;height:15px;background:#fff;">2 750,00</div>
<div class="c n" style="left:980px;top:320px;width:112px;height:15px;background:#fff;"></div>
<div class="c n" style="left:1092px;top:320px;width:112px;height:15px;background:#fff;">2 750,00</div>
<div class="c n" style="left:1204px;top:320px;width:112px;height:15px;background:#fff;"></div>
<div class="c n" style="left:1316px;top:320px;width:112px;height:15px;background:#fff;">2 750,00</div>
<div class="c " style="left:42px;top:335px;width:203px;height:15px;background:#fcf9ec;padding-left:16px">Розничный покупатель Беру</div>
<div class="c " style="left:245px;top:335px;width:189px;height:15px;background:#fcf9ec;padding-left:2px">Розничный покупатель Беру</div>
<div class="c " style="left:434px;top:335px;width:210px;height:15px;background:#fcf9ec;padding-left:2px">Основной договор</div>
<div class="c n" style="left:644px;top:335px;width:112px;height:15px;background:#fcf9ec;">5 450,00</div>
<div class="c n" style="left:756px;top:335px;width:112px;height:15px;background:#fcf9ec;"></div>
<div class="c n" style="left:868px;top:335px;width:112px;height:15px;background:#fcf9ec;">8 950,00</div>
<div class="c n" style="left:980px;top:335px;width:112px;height:15px;background:#fcf9ec;">14 400,00</div>
<div class="c n" style="left:1092px;top:335px;width:112px;height:15px;background:#fcf9ec;"></div>
<div class="c n" style="left:1204px;top:335px;width:112px;height:15px;background:#fcf9ec;"></div>
<div class="c n" style="left:1316px;top:335px;width:112px;height:15px;background:#fcf9ec;"></div>
<div class="c " style="left:42px;top:350px;width:602px;height:15px;background:#fff;padding-left:30px">Реализация товаров и услуг 0000-000010 от 05.04.2022 12:00:00</div>
<div class="c n" style="left:644px;top:350px;width:112px;height:15px;background:#fff;">5 450,00</div>
<div class="c n" style="left:756px;top:350px;width:112px;height:15px;background:#fff;"></div>
<div class="c n" style="left:868px;top:350px;width:112px;height:15px;background:#fff;">8 950,00</div>
<div class="c n" style="left:980px;top:350px;width:112px;height:15px;background:#fff;">14 400,00</div>
<div class="c n" style="left:1092px;top:350px;width:112px;height:15px;background:#fff;"></div>
<div class="c n" style="left:1204px;top:350px;width:112px;height:15px;background:#fff;"></div>
<div class="c n" style="left:1316px;top:350px;width:112px;height:15px;background:#fff;"></div>
<div class="abs" style="left:0;top:155px;width:1645px;height:1px;background:#a0a0a0"></div>
<div class="ln" style="left:8px;top:57px;width:1px;height:35px"></div>
<div class="ln" style="left:8px;top:91px;width:33px;height:1px"></div>
<div class="tg" style="left:3px;top:46px"></div>
<div class="ln" style="left:8px;top:169px;width:1px;height:196px"></div>
<div class="ln" style="left:8px;top:364px;width:33px;height:1px"></div>
<div class="tg" style="left:3px;top:158px"></div>
<div class="ln" style="left:21px;top:178px;width:1px;height:22px"></div>
<div class="ln" style="left:21px;top:200px;width:20px;height:1px"></div>
<div class="tg" style="left:16px;top:173px"></div>
<div class="ln" style="left:21px;top:208px;width:1px;height:22px"></div>
<div class="ln" style="left:21px;top:230px;width:20px;height:1px"></div>
<div class="tg" style="left:16px;top:203px"></div>
<div class="ln" style="left:21px;top:245px;width:1px;height:29px"></div>
<div class="ln" style="left:21px;top:274px;width:20px;height:1px"></div>
<div class="tg" style="left:16px;top:240px"></div>
<div class="ln" style="left:21px;top:282px;width:1px;height:22px"></div>
<div class="ln" style="left:21px;top:304px;width:20px;height:1px"></div>
<div class="tg" style="left:16px;top:277px"></div>
<div class="ln" style="left:21px;top:312px;width:1px;height:22px"></div>
<div class="ln" style="left:21px;top:334px;width:20px;height:1px"></div>
<div class="tg" style="left:16px;top:307px"></div>
<div class="ln" style="left:21px;top:342px;width:1px;height:22px"></div>
<div class="ln" style="left:21px;top:364px;width:20px;height:1px"></div>
<div class="tg" style="left:16px;top:337px"></div>
<div class="abs" style="left:1647px;top:23px;width:8px;height:772px;border-radius:4px;background:#d5d5d5"></div>
<div class="abs" style="left:1647px;top:23px;width:8px;height:556px;border-radius:4px;background:#999"></div>
<div class="abs" style="left:1648px;top:9px;width:0;height:0;border-left:3px solid transparent;border-right:3px solid transparent;border-bottom:4px solid #c0c0c0"></div>
<div class="abs" style="left:1648px;top:805px;width:0;height:0;border-left:3px solid transparent;border-right:3px solid transparent;border-top:4px solid #444"></div>
<div class="abs" style="left:22px;top:821px;width:1599px;height:8px;border-radius:4px;background:#d5d5d5"></div>
<div class="abs" style="left:22px;top:821px;width:1468px;height:8px;border-radius:4px;background:#999"></div>
<div class="abs" style="left:9px;top:822px;width:0;height:0;border-top:3px solid transparent;border-bottom:3px solid transparent;border-right:4px solid #c0c0c0"></div>
<div class="abs" style="left:1631px;top:822px;width:0;height:0;border-top:3px solid transparent;border-bottom:3px solid transparent;border-left:4px solid #444"></div>
</div>

<!-- ===== DIALOG ===== -->
<div id="dlg">
<div class="abs" style="left:12px;top:8px;font-size:18.800px;line-height:26px;color:#000;white-space:nowrap">Настройки отчета "Ведомость расчетов с клиентами"</div>
<svg style="left:820px;top:14px" width="4" height="13" viewBox="0 0 4 13"><g fill="#444"><circle cx="2" cy="1.500" r="1.200"/><circle cx="2" cy="6.500" r="1.200"/><circle cx="2" cy="11.500" r="1.200"/></g></svg>
<div class="abs" style="left:848px;top:16px;width:9px;height:9px;border:1.300px solid #333"></div>
<svg style="left:878px;top:15px" width="11" height="11" viewBox="0 0 11 11"><path d="M.5.500l10 10M10.500.5l-10 10" stroke="#333" stroke-width="1.200"/></svg>
<div class="abs" style="left:12px;top:70px;width:872px;height:298px;border:1px solid #b4b4b4"></div>
<div class="dt" style="left:12px;width:95px"><svg style="left:9px;top:7px" width="14" height="13" viewBox="0 0 14 13"><path d="M.8.800H13.200L8.300 6.300V12.200H5.700V6.300Z" fill="#eef1f5" stroke="#95a2b2" stroke-width="1.100" stroke-linejoin="round"/></svg><span style="left:31px;letter-spacing:-.140px">Фильтры</span></div>
<div class="dt" style="left:106px;width:155px"><svg style="left:8px;top:5px" width="17" height="15" viewBox="0 0 17 15"><g fill="#8fb3d3" stroke="#3d77a8" stroke-width=".8"><rect x=".5" y="1" width="8" height="2.800" rx="1"/><rect x=".5" y="6" width="8" height="2.800" rx="1"/><rect x=".5" y="11" width="8" height="2.800" rx="1"/></g><path d="M10 .5V13M8.300 11.500l1.700 2.500 1.700-2.500z" stroke="#2f6ea3" stroke-width="1" fill="#2f6ea3" stroke-dasharray="1.200 .8"/><path d="M14.200 14.500V2M12.500 3.500l1.700-2.800 1.700 2.800z" stroke="#2f6ea3" stroke-width="1.100" fill="#2f6ea3"/><path d="M14.200 9v5.500" stroke="#fff" stroke-width="1.100" stroke-dasharray=".8 .8"/></svg><span style="left:31px;letter-spacing:-.100px">Поля и сортировки</span></div>
<div class="dt" style="left:260px;width:120px"><svg style="left:9px;top:5px" width="17" height="15" viewBox="0 0 17 15"><path d="M15.300.8L8.300 7.500" stroke="#7a4f1c" stroke-width="2.900" stroke-linecap="round"/><path d="M7.800 7.300c-2-.6-3.800.5-4.300 2.500-.4 1.700-1.500 3.300-3 4 3.500.8 7.300-.3 8.400-3.300.4-1.200 0-2.500-1.100-3.200z" fill="#4d4f95"/></svg><span style="left:32px;letter-spacing:-.500px">Оформление</span></div>
<div class="dt" style="left:379px;top:43px;height:28px;width:103px;background:#fff"><svg style="left:9px;top:4px" width="14" height="15" viewBox="938 438 14 15"><g fill="none" stroke="#8a8f94" stroke-width="1"><path d="M939.500 440v10a1.500 1.500 0 0 0 1.500 1.500h1.500M939.500 442h3M943.500 443.500v4a1.500 1.500 0 0 0 1.500 1.500h1M943.500 445.500h2.500"/></g><g fill="#34495a"><rect x="938" y="438" width="5" height="2"/><rect x="942" y="441" width="5" height="2"/><rect x="942" y="450" width="5" height="2"/></g><g fill="#2a75bb"><rect x="946" y="444" width="5" height="2"/><rect x="946" y="447.500" width="5" height="2"/></g></svg><span style="left:31px;top:0;letter-spacing:-.250px">Структура</span></div>
<div class="btn" style="left:23px;top:79px;width:100px;text-align:left;padding-left:29px;letter-spacing:-.270px"><svg style="left:7px;top:4px" width="15" height="15" viewBox="0 0 15 15"><circle cx="7.500" cy="7.500" r="7" fill="#2faa4a" stroke="#1d8b3a" stroke-width="1"/><path d="M7.500 3.500v8M3.500 7.500h8" stroke="#fff" stroke-width="2.200"/></svg>Добавить</div>
<div class="btn dis" style="left:132px;top:79px;width:30px"><svg style="left:0;top:0" width="28" height="24" viewBox="682 470 28 24"><rect x="688" y="474" width="9" height="9" rx="2.2" fill="#a9c4a9"/><path d="M692.5 476v5M690 478.5h5" stroke="#e6efe6" stroke-width="1.2"/><path d="M697 478.500l2.200-1.500 1 2.200 2.300-.7.500 5.500" fill="none" stroke="#828282" stroke-width="1.600"/><rect x="699" y="485" width="5" height="5" fill="#aab7c9"/></svg></div>
<div class="btn dis" style="left:171px;top:79px;width:30px"><svg style="left:0;top:0" width="28" height="24" viewBox="721 470 28 24"><path d="M732.600 487.700L729.400 484.400L736.900 476.700L740.100 479.900Z" fill="#a5bfa5"/><path d="M740.100 479.900L736.900 476.700L739.400 474.400L742.600 477.600Z" fill="#8c9db5"/><path d="M728.200 488.900L732.600 487.700L729.400 484.400Z" fill="#c9b8a5"/></svg></div>
<div class="btn dis" style="left:210px;top:79px;width:30px"><svg style="left:0;top:0" width="28" height="24" viewBox="760 470 28 24"><circle cx="773.900" cy="482" r="7" fill="#b9a5a5"/><path d="M771.200 479.300l5.400 5.400M776.600 479.300l-5.400 5.400" stroke="#ddd2d2" stroke-width="1.600"/></svg></div>
<div class="btn dis" style="left:260px;top:79px;width:60px"><div class="dv" style="left:29px"></div><svg style="left:7px;top:5px" width="14" height="13" viewBox="0 0 14 13"><g transform="rotate(0 7 6.500)"><path d="M7 0.500L13.500 7H10v5H4V7H.5z" fill="#b3bcc6"/></g></svg><svg style="left:37px;top:5px" width="14" height="13" viewBox="0 0 14 13"><g transform="rotate(180 7 6.500)"><path d="M7 0.500L13.500 7H10v5H4V7H.5z" fill="#b3bcc6"/></g></svg></div>
<div class="btn dis" style="left:340px;top:79px;width:60px"><div class="dv" style="left:29px"></div><svg style="left:7px;top:5px" width="14" height="13" viewBox="0 0 14 13"><g transform="rotate(-90 7 6.500)"><path d="M7 0.500L13.500 7H10v5H4V7H.5z" fill="#b3bcc6"/></g></svg><svg style="left:37px;top:5px" width="14" height="13" viewBox="0 0 14 13"><g transform="rotate(90 7 6.500)"><path d="M7 0.500L13.500 7H10v5H4V7H.5z" fill="#b3bcc6"/></g></svg></div>
<div class="btn dis" style="left:420px;top:79px;width:60px"><div class="dv" style="left:29px"></div><svg style="left:6px;top:3px" width="17" height="17" viewBox="0 0 17 17"><g fill="none"><rect x=".8" y="1.500" width="3.500" height="3.500" stroke="#c8d0d6" stroke-width=".9"/><rect x="11.800" y="12" width="3.500" height="3.500" stroke="#8a96a2" stroke-width=".9"/><path d="M7.500 3h3a2.500 2.500 0 0 1 2.500 2.500V9" stroke="#7c8a96" stroke-width="1.400"/><path d="M3 8v2.500A2.500 2.500 0 0 0 5.500 13H9" stroke="#c8d0d6" stroke-width="1.300"/></g><path d="M8.500.5v5L5.800 3z" fill="#7c8a96"/><path d="M8.300 10.800v4.400l2.500-2.200z" fill="#c8d0d6"/></svg><svg style="left:36px;top:3px" width="17" height="17" viewBox="0 0 17 17"><g fill="none"><rect x=".8" y="1.500" width="3.500" height="3.500" stroke="#8a96a2" stroke-width=".9"/><rect x="11.800" y="12" width="3.500" height="3.500" stroke="#c8d0d6" stroke-width=".9"/><path d="M7.500 3h3a2.500 2.500 0 0 1 2.500 2.500V9" stroke="#c8d0d6" stroke-width="1.300"/><path d="M3 8v2.500A2.500 2.500 0 0 0 5.500 13H9" stroke="#7c8a96" stroke-width="1.400"/></g><path d="M8.500.5v5L5.800 3z" fill="#c8d0d6"/><path d="M8.300 10.500v5l2.800-2.500z" fill="#7c8a96"/></svg></div>
<div class="btn" style="left:500px;top:79px;width:60px"><div class="dv" style="left:29px"></div><svg style="left:6px;top:3px" width="17" height="17" viewBox="0 0 17 17"><g fill="#fff" stroke="#4f7397" stroke-width=".9"><rect x="4.500" y="1.500" width="10" height="10" rx="1"/><rect x="2.500" y="3.500" width="10" height="10" rx="1"/><rect x=".5" y="5.500" width="10" height="10" rx="1"/></g><path d="M2.300 10.300l3 3L10.800 6.800" fill="none" stroke="#55b02a" stroke-width="2.400"/><path d="M11.800 5.600l1.800-2" fill="none" stroke="#8cc96a" stroke-width="2"/></svg><svg style="left:35px;top:3px" width="17" height="17" viewBox="0 0 17 17"><g fill="#fff" stroke="#4f7397" stroke-width=".9"><rect x="4.500" y="1.500" width="10" height="10" rx="1"/><rect x="2.500" y="3.500" width="10" height="10" rx="1"/><rect x=".5" y="5.500" width="10" height="10" rx="1"/></g></svg></div>
<div class="btn" style="left:812px;top:79px;width:61px;text-align:left;padding-left:13px">Еще<div class="arr" style="left:47px;top:12px"></div></div>
<div class="abs" style="left:23px;top:114px;width:850px;height:244px;border:1px solid #a3a3a3;border-right-color:#b5b5b5;border-bottom-color:#b5b5b5"></div>
<div class="abs" style="left:24px;top:115px;width:848px;height:30px;background:#f2f2f2;border-bottom:1px solid #d9d9d9"></div>
<div class="abs" style="left:469px;top:115px;width:2px;height:30px;background:#fff;border-right:1px solid #cfcfcf"></div>
<div class="abs" style="left:759px;top:115px;width:2px;height:30px;background:#fff;border-right:1px solid #cfcfcf"></div>
<div class="abs" style="left:796px;top:115px;width:2px;height:30px;background:#fff;border-right:1px solid #cfcfcf"></div>
<div class="abs" style="left:833px;top:115px;width:2px;height:30px;background:#fff;border-right:1px solid #cfcfcf"></div>
<div class="trow" style="left:32px;top:122px;color:#555">Группируемые поля</div>
<div class="trow" style="left:479px;top:122px;color:#555">Заголовок</div>
<svg style="left:770px;top:123px" width="14" height="13" viewBox="0 0 14 13"><path d="M.8.800H13.200L8.300 6.300V12.200H5.700V6.300Z" fill="#e8ecf1" stroke="#95a2b2" stroke-width="1.100" stroke-linejoin="round"/></svg>
<svg style="left:805px;top:122px" width="17" height="15" viewBox="0 0 17 15"><g fill="#8fb3d3" stroke="#3d77a8" stroke-width=".8"><rect x=".5" y="1" width="8" height="2.800" rx="1"/><rect x=".5" y="6" width="8" height="2.800" rx="1"/><rect x=".5" y="11" width="8" height="2.800" rx="1"/></g><path d="M10 .5V13M8.300 11.500l1.700 2.500 1.700-2.500z" stroke="#2f6ea3" stroke-width="1" fill="#2f6ea3" stroke-dasharray="1.200 .8"/><path d="M14.200 14.500V2M12.500 3.500l1.700-2.800 1.700 2.800z" stroke="#2f6ea3" stroke-width="1.100" fill="#2f6ea3"/><path d="M14.200 9v5.500" stroke="#fff" stroke-width="1.100" stroke-dasharray=".8 .8"/></svg>
<svg style="left:843px;top:122px" width="17" height="15" viewBox="0 0 17 15"><path d="M15.300.8L8.300 7.500" stroke="#7a4f1c" stroke-width="2.900" stroke-linecap="round"/><path d="M7.800 7.300c-2-.6-3.800.5-4.300 2.500-.4 1.700-1.500 3.300-3 4 3.500.8 7.300-.3 8.400-3.300.4-1.200 0-2.500-1.100-3.200z" fill="#4d4f95"/></svg>
<div class="abs" style="left:24px;top:146px;width:848px;height:29px;background:#fff2c8"></div>
<div class="abs" style="left:49px;top:146px;width:43px;height:29px;background:#ffe59c;border:2px solid #f7c937"></div>
<div class="col" style="left:35px;top:156px"></div>
<div class="trow" style="left:53px;top:153px">Отчет</div>
<div class="col" style="left:54px;top:185px"></div>
<div class="tcb" style="left:71px;top:182px"><svg width="17" height="16" viewBox="0 0 17 16"><path d="M2 7.800 L6.400 12.600 L14.800 0.600" fill="none" stroke="#0d9647" stroke-width="2.500"/></svg></div>
<svg style="left:96px;top:186px" width="13" height="6" viewBox="0 0 13 6"><g fill="none" stroke="#9ea7b1" stroke-width="1"><rect x=".5" y=".5" width="4" height="4.400" rx=".6"/><rect x="4.500" y=".5" width="4" height="4.400" rx=".6"/><rect x="8.500" y=".5" width="4" height="4.400" rx=".6"/></g></svg>
<div class="trow" style="left:121px;top:182px">Организация, Валюта взаиморасчетов</div>
<div class="col" style="left:73px;top:214px"></div>
<div class="tcb" style="left:90px;top:211px"><svg width="17" height="16" viewBox="0 0 17 16"><path d="M2 7.800 L6.400 12.600 L14.800 0.600" fill="none" stroke="#0d9647" stroke-width="2.500"/></svg></div>
<svg style="left:115px;top:215px" width="13" height="6" viewBox="0 0 13 6"><g fill="none" stroke="#9ea7b1" stroke-width="1"><rect x=".5" y=".5" width="4" height="4.400" rx=".6"/><rect x="4.500" y=".5" width="4" height="4.400" rx=".6"/><rect x="8.500" y=".5" width="4" height="4.400" rx=".6"/></g></svg>
<div class="trow" style="left:140px;top:211px">Клиент, Контрагент, Договор</div>
<div class="tcb" style="left:109px;top:240px"><svg width="17" height="16" viewBox="0 0 17 16"><path d="M2 7.800 L6.400 12.600 L14.800 0.600" fill="none" stroke="#0d9647" stroke-width="2.500"/></svg></div>
<svg style="left:134px;top:244px" width="13" height="6" viewBox="0 0 13 6"><g fill="none" stroke="#9ea7b1" stroke-width="1"><rect x=".5" y=".5" width="4" height="4.400" rx=".6"/><rect x="4.500" y=".5" width="4" height="4.400" rx=".6"/><rect x="8.500" y=".5" width="4" height="4.400" rx=".6"/></g></svg>
<div class="trow" style="left:159px;top:240px">Объект расчетов</div>
<div class="redbox" style="left:96px;top:232px;width:180px;height:33px"></div>
<div class="lbl" style="left:12px;top:382px">Вид:</div>
<div class="btn" style="left:45px;top:378px;width:177px;height:25px;line-height:24px;box-shadow:none;border-color:#a9a9a9;background:#fff"><div class="abs" style="left:0;top:0;width:68px;height:23px;background:linear-gradient(#f4f4f4,#e4e4e4);border-right:1px solid #b5b5b5;border-radius:2px 0 0 2px;color:#333">Простой</div><span style="position:absolute;left:79px;color:#0a9647">Расширенный</span></div>
<div class="abs" style="left:229px;top:382px;font-size:14px;line-height:16px;color:#1a6fb5">?</div>
<div class="btn y" style="left:561px;top:377px;width:198px">Закрыть и сформировать</div>
<div class="btn" style="left:768px;top:377px;width:77px">Закрыть</div>
<div class="btn" style="left:854px;top:377px;width:30px;font-size:15px;color:#111">?</div>
</div>

<!-- ===== OVERLAY ===== -->
<svg style="left:0;top:0;z-index:5" width="1920" height="1040" viewBox="0 0 1920 1040">
  <path d="M478.600 215.300L542.600 355.600" stroke="#fb4143" stroke-width="6.800" stroke-linecap="round" fill="none"/><path d="M552.400 350.300L551.200 370.200L533.700 358.900Z" fill="#fb4143"/>
  <defs><filter id="sh" x="-50%" y="-50%" width="220%" height="220%"><feGaussianBlur in="SourceAlpha" stdDeviation="2"/><feOffset dx="2" dy="3"/><feComponentTransfer><feFuncA type="linear" slope=".45"/></feComponentTransfer><feMerge><feMergeNode/><feMergeNode in="SourceGraphic"/></feMerge></filter></defs>
  <g filter="url(#sh)"><circle cx="474" cy="175" r="10.500" fill="#468fd0" stroke="#3b7fbe" stroke-width=".8"/>
  <g transform="translate(474.200,175.200)"><path d="M0 0 L0 17.800 L3.500 14.500 L7 20.700 L10.800 18.600 L8 13 L12.500 12.500 Z" fill="#fff" stroke="#111" stroke-width="1.100" stroke-linejoin="miter"/></g></g>
</svg>

</body>
</html>
